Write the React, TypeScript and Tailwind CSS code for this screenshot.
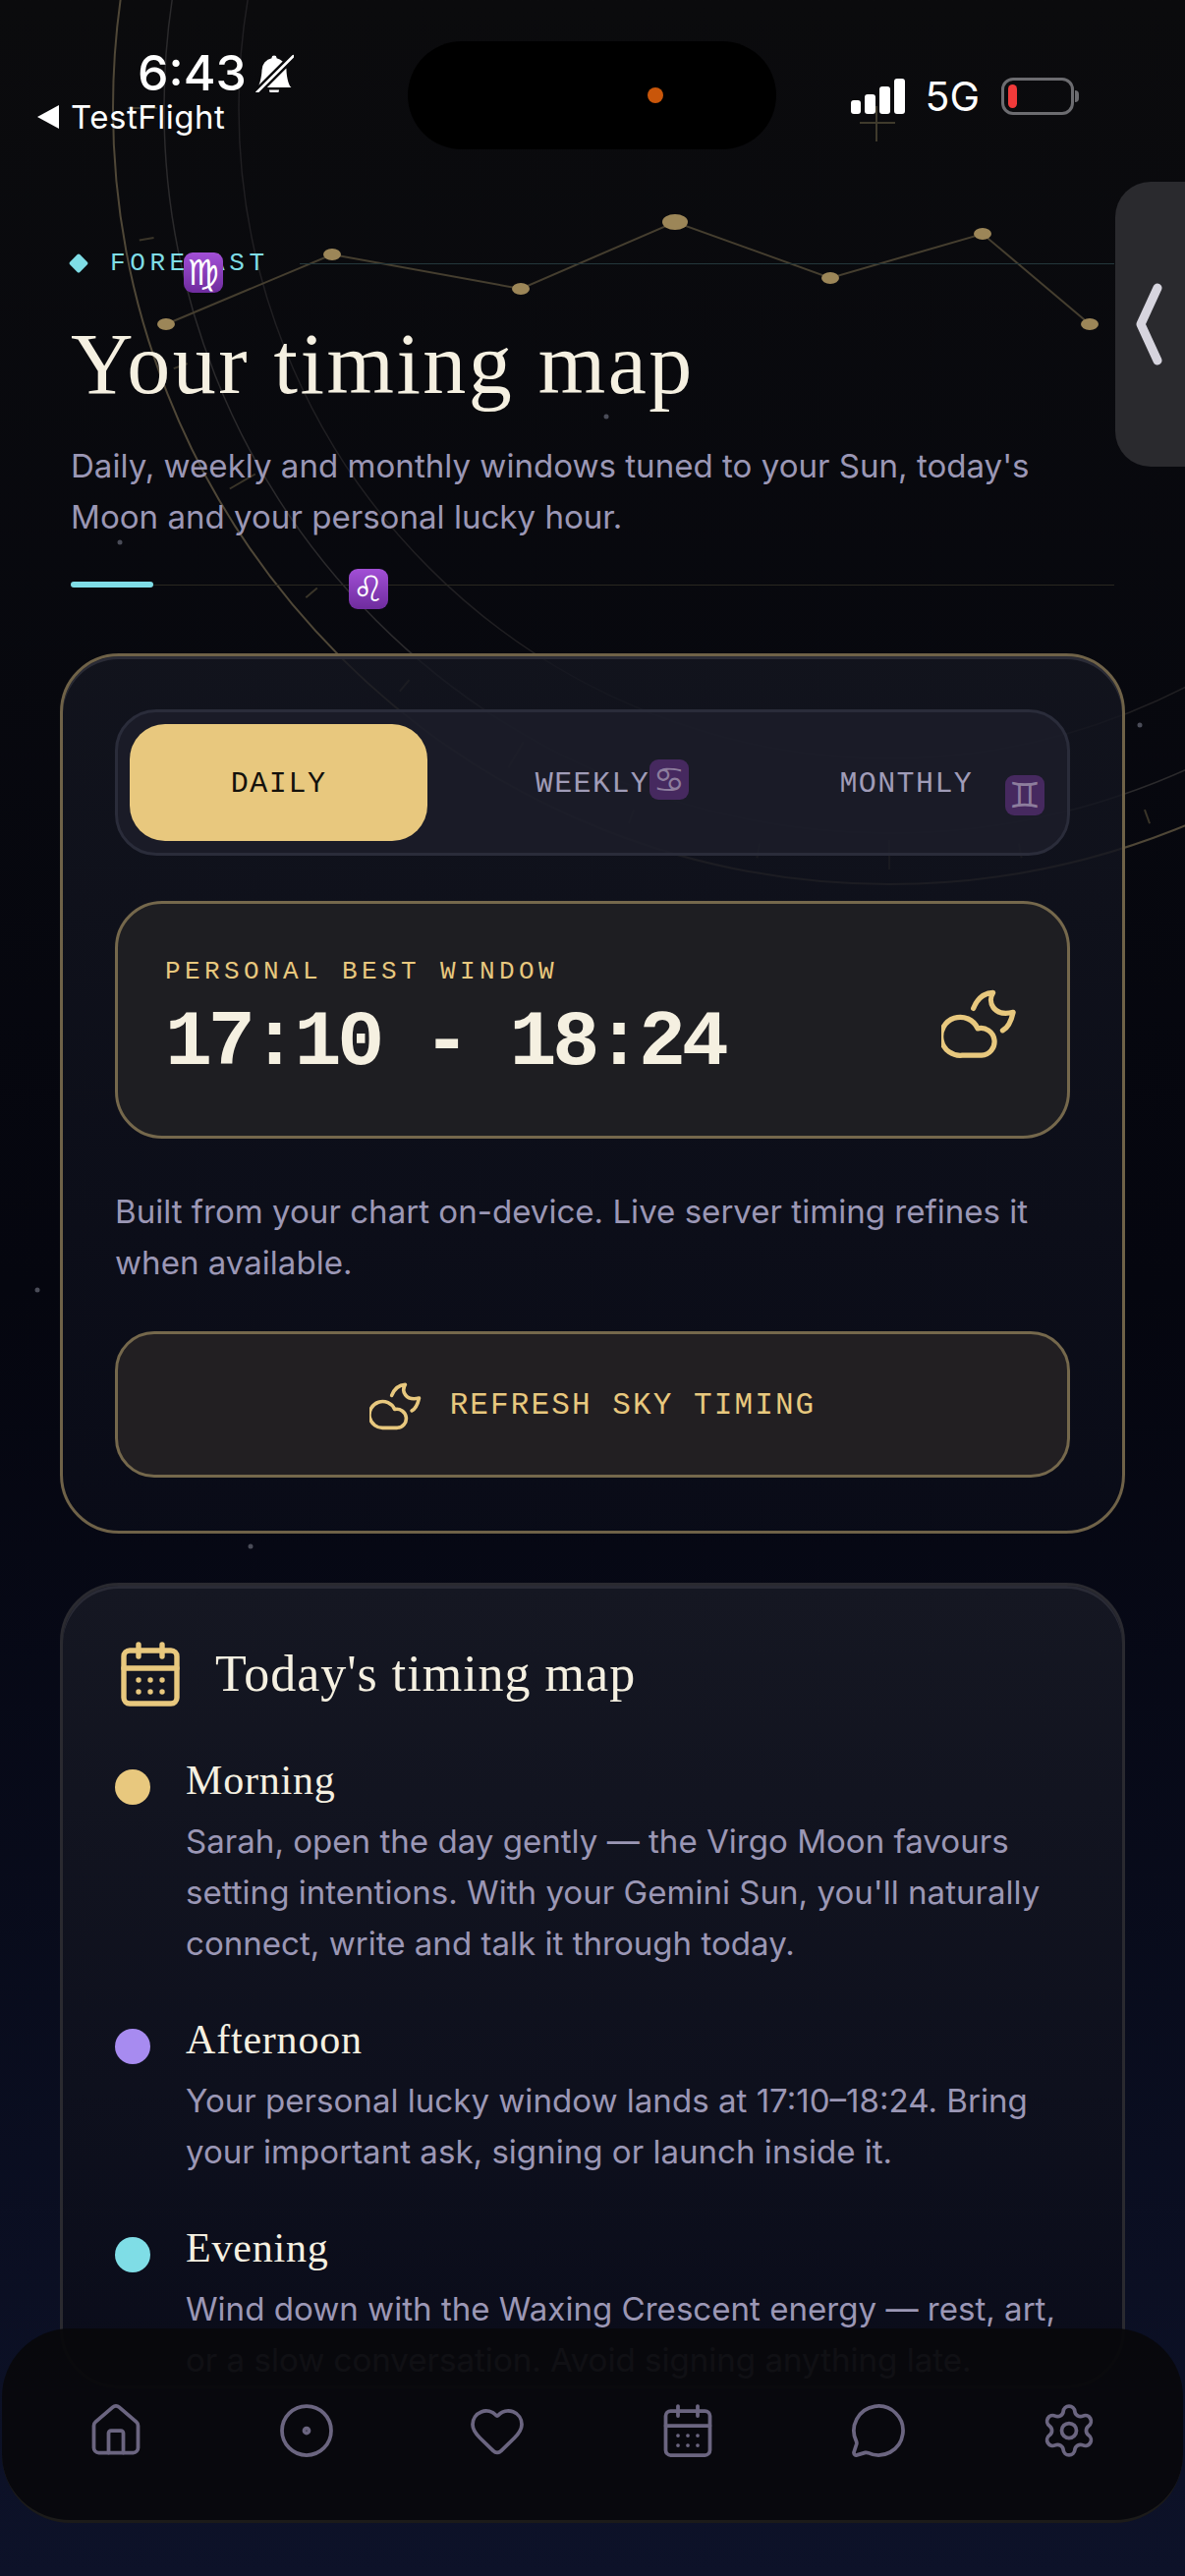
import { CalendarDays, CircleDot, Heart, House, MessageCircle, Settings } from 'lucide-react';
import { BsBellSlashFill } from 'react-icons/bs';

const sans = "font-['Inter',sans-serif]";
const mono = "font-['Liberation_Mono',monospace]";
const serif = "font-['Liberation_Serif',serif]";

const points = [
  [169, 330, 9, 6],
  [338, 259, 9, 6],
  [530, 294, 9, 6],
  [687, 226, 13, 8],
  [845, 283, 9, 6],
  [1000, 238, 9, 6],
  [1109, 330, 9, 6],
];

const slots = [
  {
    title: 'Morning',
    dot: 'bg-[#e8c87e]',
    lines: 'Sarah, open the day gently — the Virgo Moon favours setting intentions. With your Gemini Sun, you\'ll naturally connect, write and talk it through today.',
  },
  {
    title: 'Afternoon',
    dot: 'bg-[#a78bf0]',
    lines: 'Your personal lucky window lands at 17:10–18:24. Bring your important ask, signing or launch inside it.',
  },
  {
    title: 'Evening',
    dot: 'bg-[#7fdde6]',
    lines: 'Wind down with the Waxing Crescent energy — rest, art, or a slow conversation. Avoid signing anything late.',
  },
];

const navIcons = [House, CircleDot, Heart, CalendarDays, MessageCircle, Settings];

function CloudMoonIcon({ className }: { className: string }) {
  return (
    <svg className={className} viewBox="36 27 80 73" fill="none" stroke="currentColor" strokeWidth="5.4" strokeLinecap="round" strokeLinejoin="round">
      <path d="M69.5 47C73 38 80 31 90 30.5 84 40 90 56 111 51 109 60 106 67 100 70" />
      <path d="M78 96H58A20 20 0 1 1 74 68 14.2 14.2 0 1 1 78 96Z" />
    </svg>
  );
}

function Backdrop() {
  const ticks = Array.from({ length: 36 }, (_, i) => {
    const a = (i * 10 * Math.PI) / 180;
    const r1 = 775;
    const r2 = i % 3 === 0 ? 745 : 760;
    return [905 + r1 * Math.cos(a), 110 + r1 * Math.sin(a), 905 + r2 * Math.cos(a), 110 + r2 * Math.sin(a)];
  });
  return (
    <svg className="absolute inset-0" width="1206" height="2622" fill="none">
      <circle cx="905" cy="110" r="790" stroke="#4f4737" strokeWidth="2" />
      <circle cx="905" cy="110" r="738" stroke="#2b2a2c" strokeWidth="1.5" />
      <circle cx="905" cy="110" r="662" stroke="#201f22" strokeWidth="1.5" />
      {ticks.map((t, i) => (
        <line key={i} x1={t[0]} y1={t[1]} x2={t[2]} y2={t[3]} stroke="#3a3529" strokeWidth="2" />
      ))}
      <path d="M875 125h36M892 108v36" stroke="#3f3a2c" strokeWidth="2" />
      <polyline points={points.map((p) => `${p[0]},${p[1]}`).join(' ')} stroke="#453e2f" strokeWidth="2" />
      {points.map((p, i) => (
        <ellipse key={i} cx={p[0]} cy={p[1]} rx={p[2]} ry={p[3]} fill="#9c8658" />
      ))}
      {[[617, 424], [122, 552], [1160, 738], [38, 1313], [255, 1574], [88, 1762], [170, 2330], [580, 1628], [835, 1890]].map((s, i) => (
        <circle key={i} cx={s[0]} cy={s[1]} r="2.5" fill="#4a4c58" />
      ))}
    </svg>
  );
}

function StatusBar() {
  return (
    <div className="relative flex h-[250px] items-start justify-between pl-[38px] pr-[108px] pt-[42px] text-white">
      <div className={`flex w-[230px] shrink-0 flex-col ${sans}`}>
        <div className="flex items-center gap-[8px] pl-[102px] pt-[9px]">
          <span className="text-[50px] font-medium leading-[46px]">6:43</span>
          <BsBellSlashFill className="h-[40px] w-[40px] shrink-0" />
        </div>
        <div className="mt-[4px] flex items-center gap-[12px]">
          <svg width="22" height="24" viewBox="0 0 22 24"><path d="M0 12 22 0v24z" fill="#fff" /></svg>
          <span className="whitespace-nowrap text-[33px] font-normal leading-[36px] tracking-[0.5px]">TestFlight</span>
        </div>
      </div>
      <div className="relative ml-[71px] h-[110px] w-[375px] shrink-0 rounded-[55px] bg-black">
        <div className="absolute left-[244px] top-[47px] h-[16px] w-[16px] rounded-full bg-[#c9560a]" />
      </div>
      <div className={`flex items-center pt-[36px] ${sans}`}>
        <div className="flex items-end gap-[4px]">
          <div className="h-[14px] w-[10px] rounded-[3px] bg-white" />
          <div className="h-[20px] w-[11px] rounded-[3px] bg-white" />
          <div className="h-[28px] w-[11px] rounded-[3px] bg-white" />
          <div className="h-[36px] w-[11px] rounded-[3px] bg-white" />
        </div>
        <span className="ml-[20px] text-[41px] font-normal leading-[40px]">5G</span>
        <div className="ml-[22px] flex items-center">
          <div className="h-[38px] w-[74px] rounded-[12px] border-[3px] border-[#6c6c70] p-[4px]">
            <div className="h-full w-[9px] rounded-full bg-[#f03a3a]" />
          </div>
          <div className="ml-[1px] h-[12px] w-[4px] rounded-r-full bg-[#6c6c70]" />
        </div>
      </div>
    </div>
  );
}

function Tile({ glyph, className }: { glyph: string; className: string }) {
  return (
    <div className={`absolute flex h-[41px] w-[40px] items-center justify-center rounded-[9px] font-['DejaVu_Sans',sans-serif] text-[36px] leading-none ${className}`}>
      {glyph}
    </div>
  );
}

export default function App() {
  return (
    <div className="relative h-[2622px] w-[1206px] overflow-hidden bg-gradient-to-b from-[#0b0b0d] via-[#05060f] to-[#0d1229]">
      <Backdrop />
      <StatusBar />

      <main className="relative px-[61px]">
        <header className="px-[11px]">
          <div className="flex h-[36px] items-center">
            <div className="h-[16px] w-[16px] rotate-45 scale-90 rounded-[2px] bg-[#7fdde6]" />
            <span className={`ml-[24px] text-[26px] leading-none tracking-[4.6px] text-[#7fdde6] ${mono}`}>FORECAST</span>
            <div className="ml-[31px] h-px flex-1 bg-[#24383c]" />
          </div>
          <h1 className={`mt-[37px] text-[88px] font-normal leading-[96px] tracking-[2.5px] text-[#f5f0e1] ${serif}`}>Your timing map</h1>
          <p className={`mt-[29px] text-[33.1px] leading-[52px] text-[#9b97b5] ${sans}`}>
            Daily, weekly and monthly windows tuned to your Sun, today's Moon and your personal lucky hour.
          </p>
          <div className="mt-[40px] flex items-center">
            <div className="h-[6px] w-[84px] rounded-full bg-[#7fdde6]" />
            <div className="h-px flex-1 bg-[#2a2820]" />
          </div>
        </header>

        <section className="mt-[67px] h-[896px] rounded-[60px] border-[3px] border-[#6f6248] bg-gradient-to-b from-[#141620]/80 to-[#0a0c18]/90 px-[53px] pt-[54px] shadow-[inset_0_3px_0_#2a2b36]">
          <div className="flex h-[149px] items-center gap-[16px] rounded-[42px] border-[3px] border-[#2a2c3a] bg-[#1d1e2b]/80 px-[12px]">
            <div className={`flex h-[119px] flex-1 items-center justify-center rounded-[36px] bg-[#e8c87e] pt-[3px] text-[30px] tracking-[1.6px] text-[#14110c] ${mono}`}>DAILY</div>
            <div className={`flex h-[119px] flex-1 items-center justify-center pt-[3px] text-[30px] tracking-[1.4px] text-[#a09cb8] ${mono}`}>WEEKLY</div>
            <div className={`flex h-[119px] flex-1 items-center justify-center pt-[3px] text-[30px] tracking-[1.4px] text-[#a09cb8] ${mono}`}>MONTHLY</div>
          </div>

          <div className="mt-[46px] flex h-[242px] items-center justify-between rounded-[48px] border-[3px] border-[#75684c] bg-[#1e1e22] pl-[48px] pr-[50px]">
            <div className="pt-[2px]">
              <div className={`text-[26px] leading-[30px] tracking-[4.4px] text-[#e8c87e] ${mono}`}>PERSONAL BEST WINDOW</div>
              <div className={`mt-[16px] text-[80px] font-bold leading-[84px] tracking-[-4.2px] text-[#f5f0e1] ${mono}`}>17:10 - 18:24</div>
            </div>
            <CloudMoonIcon className="mt-[8px] h-[73px] w-[78px] text-[#e8c87e]" />
          </div>

          <p className={`mt-[48px] text-[33.1px] leading-[52px] text-[#9b97b5] ${sans}`}>
            Built from your chart on-device. Live server timing refines it when available.
          </p>

          <div className={`mt-[44px] flex h-[149px] items-center justify-center gap-[28px] rounded-[40px] border-[3px] border-[#75684c] bg-[#221f22] pt-[3px] text-[31px] tracking-[2.1px] text-[#e8c87e] ${mono}`}>
            <CloudMoonIcon className="h-[49px] w-[54px]" />
            REFRESH SKY TIMING
          </div>
        </section>

        <section className="mt-[50px] rounded-[60px] border-[3px] border-[#2a2a30] bg-gradient-to-b from-[#151722] to-[#0a0c1a] px-[53px] pt-[54px] shadow-[inset_0_3px_0_#2a2b36]">
          <div className="flex items-center gap-[30px]">
            <CalendarDays className="h-[72px] w-[72px] text-[#e8c87e]" strokeWidth={1.8} />
            <h2 className={`text-[52px] font-normal leading-[72px] tracking-[1px] text-[#f5f0e1] ${serif}`}>Today's timing map</h2>
          </div>
          <div className="mt-[46px] flex flex-col gap-[46px]">
            {slots.map((slot) => (
              <div key={slot.title} className="flex gap-[36px]">
                <div className={`mt-[15px] h-[36px] w-[36px] shrink-0 rounded-full ${slot.dot}`} />
                <div>
                  <div className={`text-[42px] leading-[52px] tracking-[0.8px] text-[#f5f0e1] ${serif}`}>{slot.title}</div>
                  <p className={`mt-[10px] text-[33.1px] leading-[52px] text-[#9b97b5] ${sans}`}>{slot.lines}</p>
                </div>
              </div>
            ))}
          </div>
        </section>
      </main>

      <Tile glyph="♍" className="left-[187px] top-[257px] bg-gradient-to-b from-[#a24fd6] to-[#6f2c9e] text-white" />
      <Tile glyph="♌" className="left-[355px] top-[579px] bg-gradient-to-b from-[#a24fd6] to-[#6f2c9e] text-white" />
      <Tile glyph="♋" className="left-[661px] top-[773px] bg-[#46295f] text-[#8d7d9d]" />
      <Tile glyph="♊" className="left-[1023px] top-[789px] bg-[#46295f] text-[#8d7d9d]" />

      <div className="absolute right-0 top-[185px] flex h-[290px] w-[71px] items-center rounded-l-[36px] bg-[#2a2a2e] pl-[20px]">
        <svg width="28" height="84" viewBox="0 0 28 84" fill="none"><path d="M23 5 6 42l17 37" stroke="#d6d4de" strokeWidth="9" strokeLinecap="round" strokeLinejoin="round" /></svg>
      </div>

      <nav className="absolute left-[2px] top-[2370px] flex h-[198px] w-[1202px] items-start justify-between rounded-[70px] border-b-[3px] border-[#1c1b1a] bg-[#08080c]/95 px-[86px] pt-[74px]">
        {navIcons.map((Icon, i) => (
          <Icon key={i} className="h-[60px] w-[60px] text-[#6b6580]" strokeWidth={1.5} />
        ))}
      </nav>
    </div>
  );
}
